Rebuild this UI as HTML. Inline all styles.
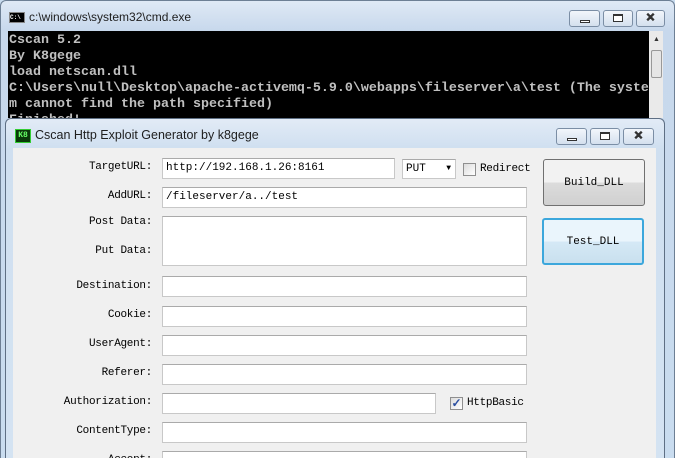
<!DOCTYPE html>
<html><head><meta charset="utf-8"><style>
*{margin:0;padding:0;box-sizing:border-box}
html,body{width:675px;height:458px;overflow:hidden}
body{background:#c9dcef;position:relative;font-family:"Liberation Sans",sans-serif}
.abs{position:absolute}
.cmd{left:0;top:0;width:675px;height:458px;background:linear-gradient(#dfe9f5,#c7d8ec 30px,#c9dcef);border:1px solid #6d7f94;border-bottom:none;border-radius:6px 6px 0 0}
.con{left:8px;top:31px;width:641px;height:87px;background:#000;color:#c0c0c0;font:bold 13.33px/16px "Liberation Mono",monospace;padding:2px 0 0 1px;white-space:pre;overflow:hidden}
.sb{left:649px;top:31px;width:14px;height:87px;background:#eaeaea}
.btn{height:17px;border:1px solid #7b8ea5;border-radius:3px;background:linear-gradient(#f2f6fb,#d4e0ee);}
.win{left:5px;top:118px;width:660px;height:340px;background:linear-gradient(#e2ebf6,#cfdff0 30px,#d4e3f2);border:1px solid #5e6f84;border-bottom:none;border-radius:6px 6px 0 0}
.client{left:13px;top:148px;width:643px;height:310px;background:#f0f0f0}
.lbl{font:11px/14px "Liberation Mono",monospace;color:#000;text-align:right;width:140px;left:12px;letter-spacing:-0.3px}
.in{background:#fff;border:1px solid #c8c8c8;border-top-color:#aaa;height:21px;font:11px/19px "Liberation Mono",monospace;padding-left:3px;color:#000}
.pb{border:1px solid #707070;border-radius:3px;background:linear-gradient(#f2f2f2 50%,#dcdcdc 50%,#d0d0d0);font:11px "Liberation Mono",monospace;display:flex;align-items:center;justify-content:center}
.cb{width:13px;height:13px;border:1px solid #8f8f8f;background:linear-gradient(135deg,#dcdcdc,#fff)}
.x{font:bold 11px/15px 'Liberation Sans';color:#fff;-webkit-text-stroke:0.8px #333;text-align:center}
</style></head><body>
<div class="abs cmd"></div>
<div class="abs" style="left:9px;top:12px;width:16px;height:11px;background:#000;border:1px solid #888;color:#fff;font:bold 6px/9px 'Liberation Mono';text-align:left">C:\</div>
<div class="abs" style="left:29px;top:10px;font-size:12px;color:#1e1e1e">c:\windows\system32\cmd.exe</div>
<div class="abs btn" style="left:569px;top:10px;width:31px"></div>
<div class="abs btn" style="left:603px;top:10px;width:30px"></div>
<div class="abs btn x" style="left:636px;top:10px;width:29px">✕</div>
<div class="abs" style="left:580px;top:20px;width:10px;height:3px;border:1px solid #333;background:#fff"></div>
<div class="abs" style="left:613px;top:14px;width:10px;height:8px;border:1px solid #333;border-top-width:2px;background:#fff"></div>
<div class="abs con">Cscan 5.2
By K8gege
load netscan.dll
C:\Users\null\Desktop\apache-activemq-5.9.0\webapps\fileserver\a\test (The syste
m cannot find the path specified)
Finished!</div>
<div class="abs sb"></div>
<div class="abs" style="left:651px;top:50px;width:11px;height:28px;border:1px solid #999;border-radius:2px;background:#e6e6e6"></div>
<div class="abs" style="left:653px;top:36px;font-size:7px;color:#333">▲</div>

<div class="abs win"></div>
<div class="abs" style="left:15px;top:129px;width:16px;height:14px;background:#0a3a0a;border:1px solid #3c3;color:#6f6;font:bold 8px/12px 'Liberation Mono';text-align:center">K8</div>
<div class="abs" style="left:35px;top:128px;font-size:12.5px;color:#1e1e1e">Cscan Http Exploit Generator by k8gege</div>
<div class="abs btn" style="left:556px;top:128px;width:31px"></div>
<div class="abs btn" style="left:590px;top:128px;width:30px"></div>
<div class="abs btn x" style="left:623px;top:128px;width:31px">✕</div>
<div class="abs" style="left:567px;top:138px;width:10px;height:3px;border:1px solid #333;background:#fff"></div>
<div class="abs" style="left:600px;top:132px;width:10px;height:8px;border:1px solid #333;border-top-width:2px;background:#fff"></div>
<div class="abs client"></div>

<div class="abs lbl" style="top:160px">TargetURL:</div>
<div class="abs in" style="left:162px;top:158px;width:233px">http://192.168.1.26:8161</div>
<div class="abs in" style="left:402px;top:159px;width:54px;height:20px;line-height:18px">PUT<span style="position:absolute;right:4px;top:0;font-size:8px">▼</span></div>
<div class="abs cb" style="left:463px;top:163px"></div>
<div class="abs lbl" style="left:480px;top:162px;text-align:left">Redirect</div>
<div class="abs lbl" style="top:189px">AddURL:</div>
<div class="abs in" style="left:162px;top:187px;width:365px">/fileserver/a../test</div>
<div class="abs lbl" style="top:215px">Post Data:</div>
<div class="abs lbl" style="top:244px">Put Data:</div>
<div class="abs in" style="left:162px;top:216px;width:365px;height:50px"></div>
<div class="abs lbl" style="top:279px">Destination:</div>
<div class="abs in" style="left:162px;top:276px;width:365px"></div>
<div class="abs lbl" style="top:308px">Cookie:</div>
<div class="abs in" style="left:162px;top:306px;width:365px"></div>
<div class="abs lbl" style="top:337px">UserAgent:</div>
<div class="abs in" style="left:162px;top:335px;width:365px"></div>
<div class="abs lbl" style="top:366px">Referer:</div>
<div class="abs in" style="left:162px;top:364px;width:365px"></div>
<div class="abs lbl" style="top:395px">Authorization:</div>
<div class="abs in" style="left:162px;top:393px;width:274px"></div>
<div class="abs cb" style="left:450px;top:397px;color:#2a4ea0;font:bold 12px/11px 'Liberation Sans';text-align:center">✓</div>
<div class="abs lbl" style="left:467px;top:396px;text-align:left">HttpBasic</div>
<div class="abs lbl" style="top:424px">ContentType:</div>
<div class="abs in" style="left:162px;top:422px;width:365px"></div>
<div class="abs" style="left:12px;top:453px;width:140px;height:5px;overflow:hidden"><div class="lbl" style="position:absolute;left:0;top:0">Accept:</div></div>
<div class="abs" style="left:162px;top:451px;width:365px;height:7px;overflow:hidden"><div class="in" style="width:365px"></div></div>

<div class="abs pb" style="left:543px;top:159px;width:102px;height:47px">Build_DLL</div>
<div class="abs pb" style="left:542px;top:218px;width:102px;height:47px;border:2px solid #3ca7dc;background:linear-gradient(#eaf5fc 50%,#d5e9f6 50%,#c9e0ee)">Test_DLL</div>
</body></html>
